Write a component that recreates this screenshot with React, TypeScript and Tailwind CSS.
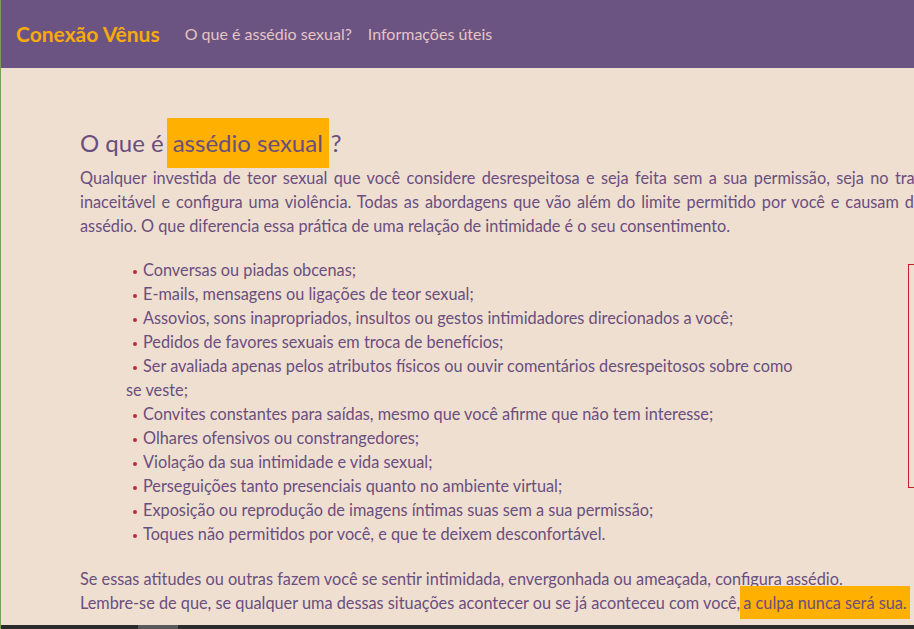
import React from 'react';

const items = [
  'Conversas ou piadas obcenas;',
  'E-mails, mensagens ou ligações de teor sexual;',
  'Assovios, sons inapropriados, insultos ou gestos intimidadores direcionados a você;',
  'Pedidos de favores sexuais em troca de benefícios;',
  'Ser avaliada apenas pelos atributos físicos ou ouvir comentários desrespeitosos sobre como se veste;',
  'Convites constantes para saídas, mesmo que você afirme que não tem interesse;',
  'Olhares ofensivos ou constrangedores;',
  'Violação da sua intimidade e vida sexual;',
  'Perseguições tanto presenciais quanto no ambiente virtual;',
  'Exposição ou reprodução de imagens íntimas suas sem a sua permissão;',
  'Toques não permitidos por você, e que te deixem desconfortável.',
];

const App = () => {
  return (
    <div className="w-[914px] h-[629px] overflow-hidden flex flex-col border-l border-[#77a053] bg-[#efdfd1] font-['Lato',sans-serif] text-[#6a4e7e]">
      {/* Navbar */}
      <nav className="h-[68px] shrink-0 bg-[#6b5481] flex items-center px-[15px] pb-[1px]">
        <span className="text-[21px] font-bold text-[#f8aa0c] mr-[17px]">Conexão Vênus</span>
        <a className="px-2 text-[16px] text-[#e6c4c4]">O que é assédio sexual?</a>
        <a className="px-2 text-[16px] text-[#e6c4c4]">Informações úteis</a>
      </nav>

      {/* Content */}
      <main className="flex-1 overflow-hidden pl-[79px] pt-[50px]">
        <h2 className="text-[24px] leading-[50px] -mb-[2px] whitespace-nowrap">
          O que é
          <span className="inline-block bg-[#ffb000] px-[6px] ml-[3px]">assédio sexual</span>
          <span className="ml-[2px]">?</span>
        </h2>

        <div className="w-[1040px] text-[16.3px] leading-[24px]">
          <div className="text-justify [text-align-last:justify]">
            Qualquer investida de teor sexual que você considere desrespeitosa e seja feita sem a sua permissão, seja no trabalho, na rua ou em casa, é
          </div>
          <div className="text-justify [text-align-last:justify]">
            inaceitável e configura uma violência. Todas as abordagens que vão além do limite permitido por você e causam desconforto são consideradas
          </div>
          <div>assédio. O que diferencia essa prática de uma relação de intimidade é o seu consentimento.</div>
        </div>

        <div className="flex mt-[20px]">
          <ul className="w-[724px] shrink-0 pl-[46px] text-[16.3px] leading-[24px]">
            {items.map((item, i) => (
              <li key={i}>
                <span className="inline-block w-[4px] h-[4px] rounded-full bg-[#c42a33] ml-[7px] mr-[6px] align-middle" />
                {item}
              </li>
            ))}
          </ul>
          <div className="shrink-0 ml-[104px] mt-[6px] w-[300px] h-[224px] border border-[#c8202a]" />
        </div>

        <p className="mt-[21px] text-[16.3px] leading-[24px] whitespace-nowrap">
          Se essas atitudes ou outras fazem você se sentir intimidada, envergonhada ou ameaçada, configura assédio.
          <br />
          Lembre-se de que, se qualquer uma dessas situações acontecer ou se já aconteceu com você,
          <span className="bg-[#ffb000] px-[3px] py-[7px]">a culpa nunca será sua.</span>
        </p>
      </main>

      {/* horizontal scrollbar */}
      <div className="h-[4px] shrink-0 bg-[#2b2b2b] flex">
        <div className="ml-[137px] w-[40px] bg-[#5a5a5a]" />
      </div>
    </div>
  );
};

export default App;
